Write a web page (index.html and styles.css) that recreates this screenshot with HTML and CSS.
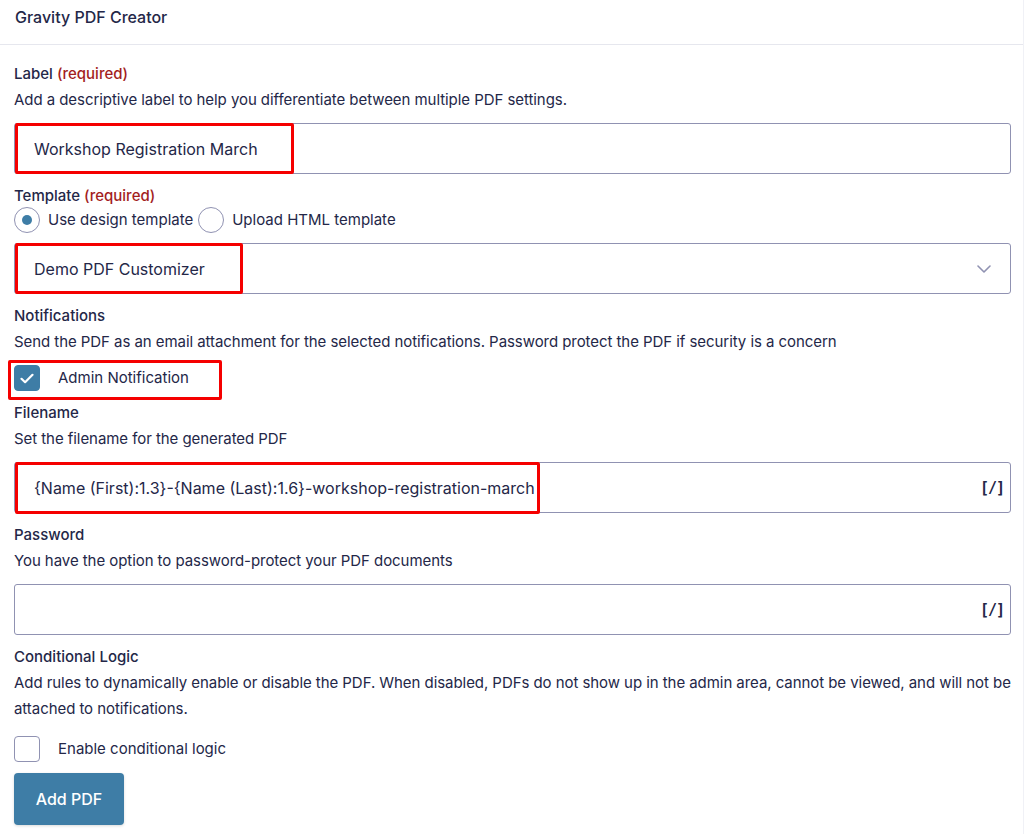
FILE: index.html
```html
<!DOCTYPE html>
<html lang="en">
<head>
    <meta charset="UTF-8">
    <meta name="viewport" content="width=device-width, initial-scale=1.0">
    <title>Gravity PDF Creator</title>
    <link rel="stylesheet" href="styles.css">
</head>
<body>

    <div class="panel">
        <div class="panel-header">Gravity PDF Creator</div>

        <div class="panel-body">
            <!-- Label -->
            <div class="field">
                <div class="field-label">Label <span class="required">(required)</span></div>
                <div class="field-desc">Add a descriptive label to help you differentiate between multiple PDF settings.</div>
                <div class="control">
                    <input class="text-input" type="text" value="Workshop Registration March">
                    <div class="highlight hl-label"></div>
                </div>
            </div>

            <!-- Template -->
            <div class="field">
                <div class="field-label">Template <span class="required">(required)</span></div>
                <div class="radio-row">
                    <label class="radio"><span class="radio-circle checked"></span>Use design template</label>
                    <label class="radio"><span class="radio-circle"></span>Upload HTML template</label>
                </div>
                <div class="control">
                    <div class="select-box">
                        Demo PDF Customizer
                        <svg class="chevron" width="14" height="8" viewBox="0 0 14 8"><path d="M1 1l6 6 6-6" fill="none" stroke="#9092b2" stroke-width="1.6" stroke-linecap="round" stroke-linejoin="round"/></svg>
                    </div>
                    <div class="highlight hl-template"></div>
                </div>
            </div>

            <!-- Notifications -->
            <div class="field">
                <div class="field-label">Notifications</div>
                <div class="field-desc">Send the PDF as an email attachment for the selected notifications. Password protect the PDF if security is a concern</div>
                <div class="control check-control">
                    <label class="check"><span class="check-box checked">
                        <svg width="14" height="11" viewBox="0 0 14 11"><path d="M1.5 5.8l3.6 3.4L12.5 1.8" fill="none" stroke="#fff" stroke-width="2.2" stroke-linecap="round" stroke-linejoin="round"/></svg>
                    </span>Admin Notification</label>
                    <div class="highlight hl-notify"></div>
                </div>
            </div>

            <!-- Filename -->
            <div class="field">
                <div class="field-label">Filename</div>
                <div class="field-desc">Set the filename for the generated PDF</div>
                <div class="control">
                    <input class="text-input" type="text" value="{Name (First):1.3}-{Name (Last):1.6}-workshop-registration-march">
                    <span class="merge-tag">[/]</span>
                    <div class="highlight hl-filename"></div>
                </div>
            </div>

            <!-- Password -->
            <div class="field">
                <div class="field-label">Password</div>
                <div class="field-desc">You have the option to password-protect your PDF documents</div>
                <div class="control">
                    <input class="text-input" type="text" value="">
                    <span class="merge-tag">[/]</span>
                </div>
            </div>

            <!-- Conditional logic -->
            <div class="field">
                <div class="field-label">Conditional Logic</div>
                <div class="field-desc">Add rules to dynamically enable or disable the PDF. When disabled, PDFs do not show up in the admin area, cannot be viewed, and will not be attached to notifications.</div>
                <div class="control cond-control">
                    <label class="check"><span class="check-box"></span>Enable conditional logic</label>
                </div>
            </div>

            <button class="btn-primary">Add PDF</button>
        </div>
    </div>

</body>
</html>
```

FILE: styles.css
```css
body {
    font-family: Inter, "Noto Sans", Arial, sans-serif;
    background-color: #ffffff;
    color: #242748;
    margin: 0;
    font-size: 15px;
}

.panel {
    border-right: 1px solid #f0f1f6;
    min-height: 834px;
    box-sizing: border-box;
}

.panel-header {
    height: 45px;
    padding: 7px 15px 0;
    box-sizing: border-box;
    font-size: 16px;
    font-weight: 500;
    line-height: 20px;
    border-bottom: 1px solid #e6e7ee;
}

.panel-body {
    padding: 16px 12px 0 14px;
}

.field {
    margin-bottom: 9px;
}

.field-label {
    font-weight: 500;
    line-height: 26px;
}

.required {
    color: #a31e1e;
}

.field-desc {
    line-height: 26px;
    letter-spacing: -0.06px;
}

.control {
    position: relative;
    margin-top: 10px;
}

.text-input {
    display: block;
    width: 100%;
    height: 51px;
    box-sizing: border-box;
    border: 1px solid #9092b2;
    border-radius: 3px;
    padding: 0 40px 0 19px;
    font-family: inherit;
    font-size: 16px;
    color: #242748;
    background: #fff;
    outline: none;
}

.merge-tag {
    position: absolute;
    right: 7px;
    top: 50%;
    transform: translateY(-50%);
    font-family: "DejaVu Sans Mono", monospace;
    font-weight: bold;
    font-size: 15px;
    letter-spacing: -1px;
    color: #242748;
}

/* anotações vermelhas por cima dos campos */
.highlight {
    position: absolute;
    border: 3px solid #f50000;
    border-radius: 2px;
    box-sizing: border-box;
    pointer-events: none;
}

.hl-label {
    left: 1px;
    top: 0;
    width: 279px;
    height: 51px;
}

.hl-template {
    left: 1px;
    top: 0;
    width: 228px;
    height: 51px;
}

.hl-filename {
    left: 1px;
    top: 0;
    width: 525px;
    height: 52px;
}

.hl-notify {
    left: -6px;
    top: -5px;
    width: 214px;
    height: 40px;
}

.radio-row {
    display: flex;
    align-items: center;
    gap: 5px;
    margin-top: -2px;
}

.radio {
    display: flex;
    align-items: center;
    gap: 8px;
    line-height: 26px;
}

.radio-circle {
    width: 26px;
    height: 26px;
    box-sizing: border-box;
    border: 1px solid #9092b2;
    border-radius: 50%;
    display: flex;
    align-items: center;
    justify-content: center;
}

.radio-circle.checked:after {
    content: "";
    width: 10px;
    height: 10px;
    border-radius: 50%;
    background-color: #3e7da6;
}

.select-box {
    height: 51px;
    box-sizing: border-box;
    border: 1px solid #9092b2;
    border-radius: 3px;
    padding: 0 19px;
    display: flex;
    align-items: center;
    justify-content: space-between;
    font-size: 16px;
}

.check-control {
    height: 26px;
}

.check {
    display: flex;
    align-items: center;
    gap: 18px;
    line-height: 26px;
}

.check-box {
    width: 26px;
    height: 26px;
    box-sizing: border-box;
    border: 1px solid #9092b2;
    border-radius: 4px;
    display: flex;
    align-items: center;
    justify-content: center;
}

.check-box.checked {
    background-color: #3e7da6;
    border-color: #3e7da6;
}

.cond-control {
    margin-top: 14px;
}

.btn-primary {
    width: 110px;
    height: 52px;
    margin-top: 2px;
    border: none;
    border-radius: 4px;
    background-color: #3e7da6;
    color: #ffffff;
    font-family: inherit;
    font-size: 16px;
    font-weight: 500;
    box-shadow: 0 1px 3px rgba(0, 0, 0, 0.15);
    cursor: pointer;
}
```
